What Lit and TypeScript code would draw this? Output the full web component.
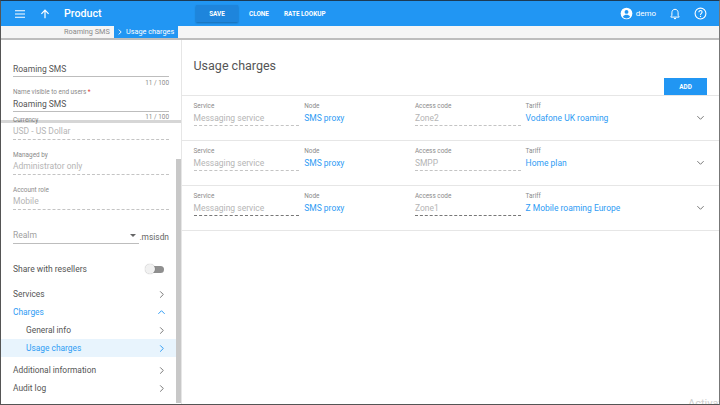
import { LitElement, html, css, svg } from "lit";
import { customElement } from "lit/decorators.js";

const chevronRight = svg`<path d="M3.5 1.5 7 5 3.5 8.5" fill="none" stroke="currentColor" stroke-width="1.1"/>`;
const chevronDown = svg`<path d="M1.5 3.5 5 7 8.5 3.5" fill="none" stroke="currentColor" stroke-width="1.1"/>`;
const chevronUp = svg`<path d="M1.5 6.5 5 3 8.5 6.5" fill="none" stroke="currentColor" stroke-width="1.1"/>`;

const rows = [
  { code: "Zone2", tariff: "Vodafone UK roaming", dark: false },
  { code: "SMPP", tariff: "Home plan", dark: false },
  { code: "Zone1", tariff: "Z Mobile roaming Europe", dark: true },
];

@customElement("app-root")
export class AppRoot extends LitElement {
  private icon(shape: unknown) {
    return html`<svg class="chev" viewBox="0 0 10 10">${shape}</svg>`;
  }

  private navRow(label: string, cls = "", shape: unknown = chevronRight) {
    return html`<div class="nav ${cls}"><span>${label}</span>${this.icon(shape)}</div>`;
  }

  private field(label: string, value: string) {
    return html`<div class="ro-field">
      <div class="label">${label}</div>
      <div class="ro-value">${value}</div>
    </div>`;
  }

  private renderToolbar() {
    return html`<header class="toolbar">
      <svg class="menu" viewBox="0 0 12 10"><path d="M1 1.700h10M1 5h10M1 8.300h10" stroke="#fff" stroke-width="1.100"/></svg>
      <svg class="up" viewBox="0 0 10 10"><path d="M5 9.200V1.400M1.400 4.800 5 1.200l3.600 3.600" fill="none" stroke="#fff" stroke-width="1.200"/></svg>
      <div class="title">Product</div>
      <button class="tb-btn save">SAVE</button>
      <button class="tb-btn">CLONE</button>
      <button class="tb-btn">RATE LOOKUP</button>
      <div class="spacer"></div>
      <svg class="user" viewBox="0 0 12 12"><circle cx="6" cy="6" r="5.400" fill="#fff"/><circle cx="6" cy="4.500" r="1.800" fill="#2196f3"/><path d="M2.700 9c.8-1.400 2-1.900 3.300-1.900S8.500 7.600 9.300 9C8.500 10 7.300 10.500 6 10.500S3.500 10 2.700 9z" fill="#2196f3"/></svg>
      <span class="demo">demo</span>
      <svg class="bell" viewBox="0 0 12 12"><path d="M6 1.300c-2 0-3.100 1.500-3.100 3.400v2.600L1.900 8.800v.3h8.200v-.3L9.100 7.300V4.700C9.100 2.800 8 1.300 6 1.300z" fill="none" stroke="#fff" stroke-width="1"/><path d="M4.800 10h2.400a1.200 1.200 0 0 1-2.400 0z" fill="#fff"/></svg>
      <svg class="help" viewBox="0 0 12 12"><circle cx="6" cy="6" r="5" fill="none" stroke="#fff" stroke-width="1"/><path d="M4.500 4.800C4.500 3.900 5.100 3.300 6 3.300s1.500.6 1.500 1.400C7.500 5.800 6 5.900 6 7.300" fill="none" stroke="#fff" stroke-width="1"/><circle cx="6" cy="8.700" r=".6" fill="#fff"/></svg>
    </header>`;
  }

  private renderSidebar() {
    return html`<aside class="sidebar">
      <div class="side-head">
        <div class="in-value first">Roaming SMS</div>
        <div class="counter">11 / 100</div>
        <div class="label name-label">Name visible to end users <span class="req">*</span></div>
        <div class="in-value">Roaming SMS</div>
        <div class="counter">11 / 100</div>
      </div>
      <div class="side-body">
        <div class="side-scroll">
          ${this.field("Currency", "USD - US Dollar")}
          ${this.field("Managed by", "Administrator only")}
          ${this.field("Account role", "Mobile")}
          <div class="realm">
            <div class="realm-select"><span>Realm</span><i class="caret"></i></div>
            <span class="suffix">.msisdn</span>
          </div>
          <div class="share">
            <span>Share with resellers</span>
            <span class="toggle"><i></i></span>
          </div>
          ${this.navRow("Services")}
          ${this.navRow("Charges", "open", chevronUp)}
          ${this.navRow("General info", "sub")}
          ${this.navRow("Usage charges", "sub active")}
          <div class="nav-gap"></div>
          ${this.navRow("Additional information")}
          ${this.navRow("Audit log")}
        </div>
        <div class="track"><div class="thumb"></div></div>
      </div>
    </aside>`;
  }

  render() {
    return html`
      ${this.renderToolbar()}
      <nav class="crumbs">
        <span class="crumb">Roaming SMS</span>
        <span class="crumb-on">
          <svg viewBox="0 0 10 10"><path d="M3 1 7 5 3 9" fill="none" stroke="#fff" stroke-width="1.500"/></svg>
          Usage charges
        </span>
      </nav>
      <div class="main">
        ${this.renderSidebar()}
        <section class="content">
          <h1>Usage charges</h1>
          <div class="add-line"><button class="add">ADD</button></div>
          ${rows.map(
            (r) => html`<div class="row ${r.dark ? "dark" : ""}">
              <div class="cell dashed"><div class="label">Service</div><div class="val">Messaging service</div></div>
              <div class="cell"><div class="label">Node</div><div class="val link">SMS proxy</div></div>
              <div class="cell dashed"><div class="label">Access code</div><div class="val">${r.code}</div></div>
              <div class="cell tariff"><div class="label">Tariff</div><div class="val link">${r.tariff}</div></div>
              ${this.icon(chevronDown)}
            </div>`
          )}
        </section>
      </div>
      <div class="watermark">Activate</div>
    `;
  }

  static styles = css`
    :host {
      display: flex;
      flex-direction: column;
      position: relative;
      width: 720px;
      height: 405px;
      box-sizing: border-box;
      overflow: hidden;
      background: #fff;
      font-family: Roboto, "Liberation Sans", sans-serif;
      color: #555;
      border-style: solid;
      border-color: #1c3a55 #777 #555 #555;
      border-width: 1px;
    }

    .toolbar {
      display: flex;
      align-items: center;
      flex: none;
      height: 25px;
      background: #2196f3;
      color: #fff;
    }
    .menu { width: 12px; height: 10px; margin-left: 13px; }
    .up { width: 10px; height: 10px; margin-left: 14px; }
    .title {
      font-size: 10.700px;
      font-weight: 500;
      margin-left: 14px;
      width: 132px;
    }
    .tb-btn {
      border: none;
      background: none;
      color: #fff;
      font: 700 6.400px Roboto, sans-serif;
      padding: 0;
      height: 17px;
      margin-right: 15px;
    }
    .tb-btn.save {
      width: 42px;
      margin-right: 11px;
      background: #1e85dc;
      box-shadow: 0 1px 2px rgba(0, 0, 0, 0.3);
    }
    .spacer { flex: 1; }
    .user { width: 13px; height: 13px; }
    .demo { font-size: 8px; margin: 0 13px 0 3px; }
    .bell { width: 12px; height: 12px; margin-right: 13px; }
    .help { width: 13px; height: 13px; margin-right: 12px; }

    .crumbs {
      display: flex;
      align-items: stretch;
      flex: none;
      height: 12px;
      padding-left: 63px;
      background: #f5f5f5;
      border-bottom: 2px solid #bdbdbd;
      font-size: 7.300px;
      line-height: 12px;
    }
    .crumb { color: #8a8a8a; width: 50px; }
    .crumb-on {
      display: flex;
      align-items: center;
      gap: 3px;
      padding: 0 3px;
      width: 58px;
      background: #2196f3;
      color: #fff;
      white-space: nowrap;
    }
    .crumb-on svg { width: 6px; height: 6px; flex: none; }

    .main { display: flex; flex: 1; min-height: 0; }

    .sidebar {
      position: relative;
      display: flex;
      flex-direction: column;
      flex: none;
      width: 180px;
      border-right: 1px solid #e6e6e6;
    }
    .side-head {
      position: relative;
      z-index: 1;
      flex: none;
      height: 77px;
      width: 175px;
      box-sizing: border-box;
      padding: 0 7px 0 12px;
      background: #fff;
    }
    /* grey band the scrolled body shows through */
    .side-head::after {
      content: "";
      position: absolute;
      left: 0;
      top: 80px;
      width: 180px;
      height: 2.500px;
      background: rgba(0, 0, 0, 0.16);
    }
    .in-value {
      font-size: 8.500px;
      line-height: 12px;
      height: 12px;
      padding-bottom: 1px;
      color: #555;
      border-bottom: 1px solid #bdbdbd;
    }
    .in-value.first { margin-top: 23px; }
    .first + .counter { margin-top: 1px; }
    .counter {
      font-size: 6.400px;
      line-height: 10px;
      text-align: right;
      color: #8a8a8a;
    }
    .label {
      font-size: 6.400px;
      line-height: 9px;
      color: #8a8a8a;
    }
    .name-label { margin-bottom: 1px; }
    .req { color: #e53935; }

    .side-body {
      display: flex;
      flex: 1;
      min-height: 0;
    }
    .side-scroll {
      flex: none;
      width: 175px;
      margin-top: -2px;
    }
    .ro-field {
      height: 35px;
      padding: 1px 7px 0 12px;
      box-sizing: border-box;
    }
    .ro-value {
      font-size: 8.500px;
      line-height: 12px;
      height: 14px;
      color: #b5b5b5;
      border-bottom: 1px dashed #c4c4c4;
    }
    .realm {
      display: flex;
      align-items: flex-end;
      margin: 10px 7px 0 12px;
      height: 14px;
    }
    .realm-select {
      display: flex;
      flex: 1;
      justify-content: space-between;
      align-items: flex-start;
      height: 13px;
      line-height: 10px;
      font-size: 8.500px;
      color: #a0a0a0;
      border-bottom: 1px solid #bdbdbd;
    }
    .caret {
      border: 3px solid transparent;
      border-top-color: #666;
      border-bottom: none;
      margin: 4px 3px 0 0;
    }
    .suffix {
      width: 30px;
      padding-bottom: 1px;
      font-size: 8.400px;
      line-height: 12px;
      text-align: right;
      color: #666;
    }
    .share {
      display: flex;
      justify-content: space-between;
      align-items: center;
      margin: 17px 7px 0 12px;
      height: 16px;
      font-size: 8.500px;
    }
    .toggle {
      position: relative;
      width: 18px;
      height: 7px;
      margin-right: 5px;
      border-radius: 4px;
      background: #8f8f8f;
    }
    .toggle i {
      position: absolute;
      left: -1px;
      top: -1.500px;
      width: 10px;
      height: 10px;
      border-radius: 50%;
      background: #f1f1f1;
      box-shadow: 0 0 1px rgba(0, 0, 0, 0.4);
    }
    .nav {
      display: flex;
      justify-content: space-between;
      align-items: center;
      height: 18px;
      padding: 0 10px 0 12px;
      font-size: 8.400px;
      color: #555;
    }
    .share + .nav { margin-top: 8px; }
    .nav.sub { padding-left: 25px; }
    .nav.open { color: #2f9cf4; }
    .nav.active { color: #2f9cf4; background: #e8f4fd; }
    .nav-gap { height: 4px; }
    .chev { width: 9px; height: 9px; flex: none; color: #777; }
    .nav.open .chev, .nav.active .chev { color: #2f9cf4; }

    .track {
      flex: none;
      width: 5px;
      padding-top: 42px;
    }
    .thumb { height: 244px; background: #c8c8c8; }

    .content { flex: 1; min-width: 0; }
    h1 {
      margin: 18px 0 0 11.500px;
      font-size: 12.500px;
      font-weight: 400;
      line-height: 16px;
      color: #555;
    }
    .add-line {
      display: flex;
      justify-content: flex-end;
      margin-top: 4px;
      padding-right: 12px;
    }
    .add {
      width: 43px;
      height: 17px;
      padding: 0;
      border: none;
      background: #2196f3;
      color: #fff;
      font: 700 6.400px Roboto, sans-serif;
    }
    .row {
      display: flex;
      align-items: flex-start;
      height: 45px;
      box-sizing: border-box;
      padding: 6px 11px 0 11.500px;
      border-top: 1px solid #e6e6e6;
    }
    .row:last-child { height: 46px; border-bottom: 1px solid #e6e6e6; }
    .cell { width: 105.700px; height: 24px; margin-right: 5px; flex: none; box-sizing: border-box; }
    .cell.tariff { width: 165px; margin-right: 0; }
    .cell.dashed { border-bottom: 1px dashed #c4c4c4; }
    .row.dark .cell.dashed { border-bottom-color: #777; }
    .val {
      font-size: 8.500px;
      line-height: 12px;
      margin-top: 1px;
      color: #b5b5b5;
    }
    .val.link { color: #2f9cf4; }
    .row .chev { margin: 11px 0 0 5px; }

    .watermark {
      position: absolute;
      left: 687px;
      top: 396px;
      font-size: 11px;
      color: #d0d0d0;
      white-space: nowrap;
    }
  `;
}
